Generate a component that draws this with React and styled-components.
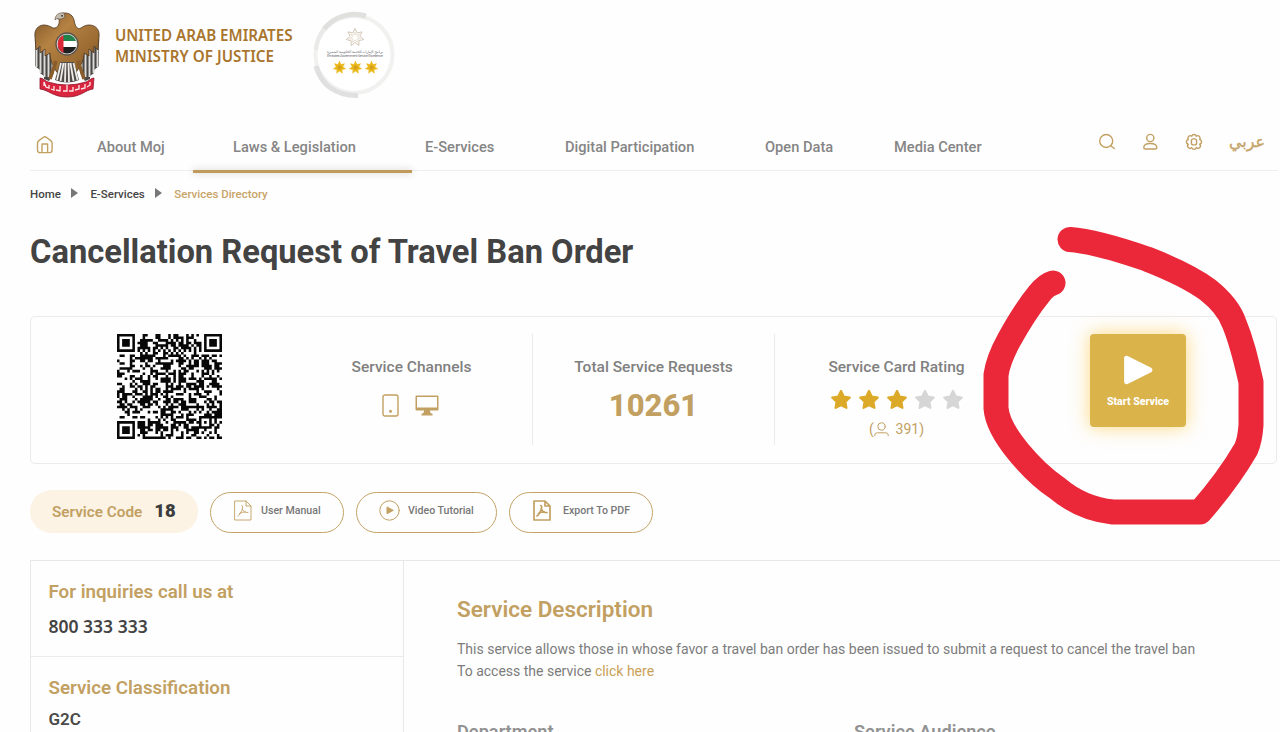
import React from "react";
import styled, { createGlobalStyle } from "styled-components";

const gold = "#c2a062";

const GlobalStyle = createGlobalStyle`
  * { box-sizing: border-box; }
  html, body { margin: 0; background: #fefefe; overflow: hidden; }
  body { font-family: Roboto, "Liberation Sans", sans-serif; color: #444; }
`;

const Page = styled.div`
  position: relative;
  width: 1280px;
  height: 732px;
  overflow: hidden;
  padding-left: 30px;
  white-space: nowrap;
`;

const Header = styled.header`
  display: flex;
  height: 124px;
  padding: 9px 0 0 3px;
  align-items: flex-start;
`;

const Ministry = styled.div`
  width: 211px;
  padding: 16px 0 0 14px;
  font: 600 15.2px/21px "Noto Sans", "Open Sans", sans-serif;
  color: #a9752d;
`;

const MinistryLine = styled.div`
  letter-spacing: ${(p) => p.$track}px;
`;

const Nav = styled.nav`
  display: flex;
  height: 47px;
  width: 1248px;
  border-bottom: 1px solid #eeeeee;
`;

const NavIcon = styled.a`
  display: flex;
  width: ${(p) => p.$w}px;
  padding: ${(p) => p.$top}px 0 0 ${(p) => p.$pad || 0}px;
`;

const NavItem = styled.a`
  position: relative;
  width: ${(p) => p.$w}px;
  padding-left: ${(p) => p.$pad || 0}px;
  font-size: 14.65px;
  font-weight: 500;
  line-height: 46px;
  color: #858585;
  ${(p) =>
    p.$active &&
    `&::after {
      content: "";
      position: absolute;
      left: 0; right: 0; bottom: -3px;
      height: 3px;
      background: #c09a5b;
      box-shadow: 0 0 7px rgba(80, 70, 50, 0.3);
    }`}
`;

const Arabic = styled.a`
  padding-top: 5px;
  font: 400 16px/26px "DejaVu Sans", sans-serif;
  -webkit-text-stroke: 0.4px #c5a56c;
  color: #c5a56c;
`;

const Crumbs = styled.div`
  display: flex;
  align-items: center;
  height: 16px;
  margin-top: 15px;
  font-size: 11.5px;
  font-weight: 500;
`;

const Crumb = styled.span`
  color: ${(p) => (p.$current ? "#c8a468" : "#454545")};
`;

const CrumbArrow = styled.i`
  margin: -2px 12px 0 10.5px;
  border-left: 7px solid #777;
  border-top: 5px solid transparent;
  border-bottom: 5px solid transparent;
`;

const Title = styled.h1`
  margin: 29px 0 0;
  padding-top: 1px;
  font-size: 32.7px;
  font-weight: 700;
  line-height: 40px;
  color: #434343;
`;

const Card = styled.section`
  display: flex;
  width: 1247px;
  height: 148px;
  margin-top: 44px;
  padding-top: 17px;
  border: 1px solid #ebebeb;
  border-radius: 5px;
`;

const QrCell = styled.div`
  width: 260px;
  padding-left: 86px;
`;

const Stat = styled.div`
  display: flex;
  flex-direction: column;
  align-items: center;
  width: ${(p) => p.$w}px;
  height: 111px;
  padding-top: 22px;
  ${(p) => p.$line && "border-right: 1px solid #ebebeb;"}
`;

const StatLabel = styled.div`
  font-size: 15.5px;
  font-weight: 500;
  line-height: 22px;
  color: #808080;
`;

const Channels = styled.div`
  display: flex;
  align-items: center;
  gap: 16px;
  margin: 16px 3px 0 0;
`;

const BigNumber = styled.div`
  margin-top: 9px;
  font-size: 31px;
  font-weight: 800;
  line-height: 38px;
  color: ${gold};
`;

const Stars = styled.div`
  display: flex;
  gap: 6px;
  margin-top: 11px;
`;

const Voters = styled.div`
  display: flex;
  align-items: center;
  margin-top: 10px;
  font-size: 14px;
  line-height: 18px;
  color: ${gold};
`;

const StartCell = styled.div`
  padding-left: 72px;
`;

const StartButton = styled.button`
  display: flex;
  flex-direction: column;
  align-items: center;
  width: 96px;
  height: 93px;
  padding: 21px 0 0;
  border: 0;
  border-radius: 4px;
  background: #dab34b;
  box-shadow: 0 0 18px 1px rgba(255, 200, 70, 0.62);
  color: #fff;
  font: 800 10.6px/15px Roboto, sans-serif;
`;

const StartLabel = styled.span`
  margin-top: 9px;
`;

const Actions = styled.div`
  display: flex;
  align-items: center;
  height: 43px;
  margin-top: 26px;
`;

const CodeChip = styled.div`
  display: flex;
  align-items: center;
  width: 168px;
  height: 43px;
  margin-right: 12px;
  padding-left: 22px;
  border-radius: 22px;
  background: #fcf3e5;
  color: ${gold};
  font-size: 15.3px;
  font-weight: 600;
`;

const CodeValue = styled.b`
  margin: -2px 0 0 12px;
  color: #3c3c3c;
  font-size: 18.5px;
`;

const Pill = styled.button`
  display: flex;
  align-items: center;
  width: ${(p) => p.$w}px;
  height: 41px;
  margin: 1px 12px 0 0;
  padding: 0 0 4px ${(p) => p.$pad}px;
  border: 1px solid #c4a368;
  border-radius: 21px;
  background: transparent;
  color: #777;
  font: 500 10.6px/14px Roboto, sans-serif;
`;

const PillText = styled.span`
  margin: 2px 0 0 ${(p) => p.$gap}px;
`;

const Details = styled.main`
  display: flex;
  width: 1250px;
  height: 190px;
  margin-top: 27px;
  border-top: 1px solid #e8e8e8;
`;

const Aside = styled.aside`
  width: 374px;
  border: 1px solid #e8e8e8;
  border-width: 0 1px;
`;

const InfoBlock = styled.div`
  height: ${(p) => p.$h}px;
  padding: 18px 0 0 17.5px;
  border-bottom: 1px solid #ebebeb;
`;

const InfoLabel = styled.div`
  font-size: 18.75px;
  font-weight: 600;
  line-height: 27px;
  color: ${gold};
`;

const Phone = styled.div`
  margin-top: 8px;
  font: 600 17.5px/24px "Noto Sans", sans-serif;
  color: #444;
`;

const InfoValue = styled.div`
  margin-top: 6px;
  font-size: 17px;
  font-weight: 600;
  line-height: 22px;
  color: #4a4a4a;
`;

const Content = styled.div`
  padding: 32px 0 0 53px;
`;

const SectionTitle = styled.h2`
  margin: 0;
  font-size: 22.5px;
  font-weight: 600;
  line-height: 32px;
  color: ${gold};
`;

const Description = styled.p`
  margin: 13px 0 0;
  font-size: 14px;
  line-height: 22px;
  color: #7c7c7c;
`;

const Link = styled.a`
  color: #c9a057;
`;

const Columns = styled.div`
  display: grid;
  grid-template-columns: 397px 300px;
  margin-top: 39px;
  font-size: 18.2px;
  font-weight: 600;
  line-height: 22px;
  color: #929292;
`;

const Marker = styled.svg`
  position: absolute;
  left: 970px;
  top: 215px;
  pointer-events: none;
`;

const Emblem = () => (
  <svg width="68" height="90" viewBox="0 0 68 90">
    <defs>
      <linearGradient id="plumage" x1="0" x2="1" y1="0" y2="1">
        <stop offset="0" stopColor="#7d5628" />
        <stop offset=".35" stopColor="#b58243" />
        <stop offset=".7" stopColor="#9a6a31" />
        <stop offset="1" stopColor="#5f3e1a" />
      </linearGradient>
      <clipPath id="disc"><circle cx="34" cy="35" r="9.500" /></clipPath>
    </defs>
    <path d="M2 30h19v34l-5 8-5-2v-3l-4-3v-3l-5-4zM66 30H47v34l5 8 5-2v-3l4-3v-3l5-4z" fill="#4a4846" />
    <path d="M3.500 33v25M7.500 36v28M11.500 38v30M15.500 41v27M19.500 44v22M64.500 33v25M60.500 36v28M56.500 38v30M52.500 41v27M48.500 44v22" stroke="#dedcd8" strokeWidth="1.900" />
    <path d="M24 9c1-3 4-5 8-5 5 0 8 3 9 7 1 6 3 10 7 8 3-2 5-3 8-3 7 0 11 5 10 12l-1 13-4-4v7l-5-4v7l-5-3c0 8-3 12-7 18l-3 5H27l-4-5c-3-6-6-10-6-18l-5 3v-7l-5 4v-7l-4 4-1-13c-1-7 3-12 9-12 4 0 7 2 9 3 5 1 7-5 6-9z" fill="url(#plumage)" stroke="#4d361f" strokeWidth=".8" />
    <path d="M22 11c0-5 4-8 9-7l1 4c-2 1-3 2.500-6 2-1.500-.5-3-.5-4 1z" fill="#c2bbb0" stroke="#5c4a35" strokeWidth=".6" />
    <circle cx="29" cy="6.800" r=".9" fill="#332519" />
    <path d="M27 53h14l5 18q-12 5-24 0z" fill="#4e4b49" />
    <path d="m28 54-4 17m6.500-17-3 18m5-18-.5 19m3.500-19 .5 19m1.500-19 3 18m0-18 4 17" stroke="#eeece8" strokeWidth="1.800" />
    <path d="m23 52-6 18m28-18 6 18" stroke="#8a5c2a" strokeWidth="3.500" />
    <path d="M7 69c3 0 5 3 8 4q19 6 38 0c3-1 5-4 8-4l-1 11C52 81 48 88 34 88S16 81 7 80z" fill="#d9253d" stroke="#8e182b" strokeWidth=".8" />
    <path d="m11 77 0-4 2 5 3 1v-3m2 4 3 1v-4m2 4 4 1v-5m3 5h4v-6m2 6h4v-4m2 3 4-1v-4m2 4 4-1v-4m2 3 3-2v-3" fill="none" stroke="#ffe9ea" strokeWidth="1.300" />
    <circle cx="34" cy="35" r="11" fill="#e3e1dc" stroke="#5c544b" strokeWidth="1.300" />
    <g clipPath="url(#disc)">
      <path d="M24 25h20v7H24z" fill="#21834c" />
      <path d="M24 32h20v6H24z" fill="#fff" />
      <path d="M24 38h20v8H24z" fill="#202020" />
      <path d="M24 25h6.500v20H24z" fill="#dc2938" />
    </g>
  </svg>
);

const burst = (cx, cy, r, inner) =>
  Array.from({ length: 14 }, (_, i) => {
    const a = (i * Math.PI) / 7 - Math.PI / 2;
    const q = i % 2 ? inner : r;
    return `${cx + Math.cos(a) * q},${cy + Math.sin(a) * q}`;
  }).join(" ");

const SealText = styled.text`
  font: 500 3.7px "DejaVu Sans", sans-serif;
  fill: #77777c;
`;

const Seal = () => (
  <svg width="84" height="92" viewBox="0 0 84 92">
    <circle cx="42" cy="45.500" r="38.500" fill="#fff" stroke="#f1f1f0" strokeWidth="4" />
    <path d="M12 20A39 39 0 0 1 54 7" fill="none" stroke="#e0e0df" strokeWidth="5" />
    <path d="M4 41a39 39 0 0 1 8-21" fill="none" stroke="#e9e9e8" strokeWidth="4" />
    <path d="M4 57c5 19 20 30 42 29.500" fill="none" stroke="#dfe0df" strokeWidth="5" />
    <polygon points={burst(43, 28.500, 9, 5)} fill="#fffefa" stroke="#d5c9bb" strokeWidth="1" />
    <polygon points={burst(43, 28.500, 5.500, 2.500)} fill="none" stroke="#d8cec3" strokeWidth=".6" />
    <SealText x="43" y="43.500" textAnchor="middle" textLength="56">برنامج الإمارات للخدمة الحكومية المتميزة</SealText>
    <SealText x="43" y="47.500" textAnchor="middle" textLength="56">Emirates Government Service Excellence</SealText>
    {[27.5, 43.5, 59.5].map((x) => (
      <g key={x}>
        <polygon points={burst(x, 58.500, 7, 3.700)} fill="#ecba20" />
        <polygon points={burst(x, 58.500, 3.600, 1.200)} fill="#d39b12" />
      </g>
    ))}
  </svg>
);

const N = 41;
const isFinder = (x, y) => (x < 8 && y < 8) || (x > 32 && y < 8) || (x < 8 && y > 32);
const ring = (x, y, cx, cy) => Math.max(Math.abs(x - cx), Math.abs(y - cy));
const qrOn = (x, y) => {
  if (isFinder(x, y)) {
    const d = ring(x, y, x > 20 ? 37 : 3, y > 20 ? 37 : 3);
    return d === 3 || d < 2;
  }
  if (ring(x, y, 34, 34) < 3) return ring(x, y, 34, 34) !== 1;
  if (x === 6 || y === 6) return (x + y) % 2 === 0;
  let h = Math.imul(x + 11, 374761393) ^ Math.imul(y + 29, 668265263);
  h = Math.imul(h ^ (h >>> 13), 1274126177);
  return ((h ^ (h >>> 16)) & 255) < 132;
};
const qrPath = Array.from({ length: N * N }, (_, i) => [i % N, Math.floor(i / N)])
  .filter(([x, y]) => qrOn(x, y))
  .map(([x, y]) => `M${x} ${y}h1v1h-1z`)
  .join("");

const QrCode = () => (
  <svg width="105" height="105" viewBox="0 0 41 41">
    <path d={qrPath} fill="#080808" />
  </svg>
);

const Line = styled.svg`
  flex: none;
  fill: none;
  stroke: ${gold};
  stroke-width: ${(p) => p.$s || 1.4};
  stroke-linecap: round;
  stroke-linejoin: round;
`;

const HomeIcon = () => (
  <Line width="18" height="18" viewBox="0 0 18 18">
    <path d="M1.500 7.200c0-1 .4-1.700 1.100-2.300L7.400 1.300q1.400-1 2.900 0L15 4.900c.8.6 1.100 1.300 1.100 2.300V14q0 2.600-2.500 2.600H4Q1.500 16.600 1.500 14zM6 16.500V8h5.600v8.500" />
  </Line>
);
const SearchIcon = () => (
  <Line width="18" height="18" viewBox="0 0 18 18">
    <circle cx="8.200" cy="8" r="6.500" /><path d="m13 13 3.300 2.500" />
  </Line>
);
const UserIcon = () => (
  <Line width="16" height="18" viewBox="0 0 16 18">
    <circle cx="8.300" cy="5" r="3.600" />
    <path d="M1.800 14.500c0-3 2.500-4 6.500-4s6.500 1 6.500 4q0 1.500-1.500 1.500H3.300q-1.500 0-1.500-1.500z" />
  </Line>
);
const GearIcon = () => (
  <Line width="18" height="18" viewBox="0 0 18 18">
    <path d="M6.700 3.200a2.400 2.400 0 0 1 4.600 0 2.400 2.400 0 0 1 3.400 3.300 2.400 2.400 0 0 1 0 4.700 2.400 2.400 0 0 1-3.400 3.400 2.400 2.400 0 0 1-4.600 0 2.400 2.400 0 0 1-3.400-3.400 2.400 2.400 0 0 1 0-4.700 2.400 2.400 0 0 1 3.400-3.300z" />
    <rect x="6.400" y="5.900" width="5.200" height="6" rx="2" />
  </Line>
);
const PhoneIcon = () => (
  <Line width="17" height="23" viewBox="0 0 17 23">
    <rect x="1" y="1" width="15" height="21" rx="2" /><circle cx="8.500" cy="17.200" r=".8" fill={gold} />
  </Line>
);
const MonitorIcon = () => (
  <svg width="24" height="21" viewBox="0 0 24 21">
    <path fillRule="evenodd" fill={gold} d="M1.500.5h21q1 0 1 1v13q0 1-1 1H15c0 2 .5 3 2.500 3.300v1.700h-11v-1.700C8.500 18.500 9 17.500 9 15.500H1.500q-1 0-1-1v-13q0-1 1-1zM2 2v10.500h20V2z" />
  </svg>
);
const Star = ({ on }) => (
  <svg width="22" height="21" viewBox="0 0 22 21">
    <path d="m11 2 2.700 5.600 6.100.9-4.400 4.300 1 6.100L11 16l-5.400 2.900 1-6.100L2.200 8.500l6.100-.9z" fill={on ? "#dca928" : "#d6d6d6"} stroke={on ? "#dca928" : "#d6d6d6"} strokeWidth="2.200" strokeLinejoin="round" />
  </svg>
);
const VoterIcon = () => (
  <Line $s={1} width="15" height="15" viewBox="0 0 15 15">
    <circle cx="7.500" cy="4.500" r="3.700" /><path d="M.8 13.800v-1q0-2 2.700-2h8q2.700 0 2.700 2v1" />
  </Line>
);
const PlayIcon = () => (
  <svg width="29" height="30" viewBox="0 0 29 30">
    <path d="M2.500 3.200v23.600L26 15z" fill="#fff" stroke="#fff" strokeWidth="4.800" strokeLinejoin="round" />
  </svg>
);
const PdfIcon = ({ bold }) => (
  <Line $s={bold ? 1.7 : 0.9} width="18" height="21" viewBox="0 0 18 21">
    <path d="M1 1h11l5 5v14H1zM12 1v5h5" />
    <path d="M7.800 5.500c1 0 .8 1.500.7 2.500C8 11 5.500 15.500 4 16M8.500 9.500c1 2 3.500 3.500 5.500 3M5.500 13.500c2-1.200 4-1.500 6-1.500" />
  </Line>
);
const VideoIcon = () => (
  <Line $s={1} width="21" height="21" viewBox="0 0 21 21">
    <circle cx="10.500" cy="10.500" r="9.700" /><path d="M8 7.300v6.400l6-3.200z" fill={gold} />
  </Line>
);

export default function App() {
  return (
    <Page>
      <GlobalStyle />
      <Header>
        <Emblem />
        <Ministry>
          <MinistryLine $track={-0.02}>UNITED ARAB EMIRATES</MinistryLine>
          <MinistryLine $track={0.05}>MINISTRY OF JUSTICE</MinistryLine>
        </Ministry>
        <Seal />
      </Header>
      <Nav>
        <NavIcon $w={67} $top={12} $pad={6}><HomeIcon /></NavIcon>
        <NavItem $w={96}>About Moj</NavItem>
        <NavItem $w={219} $pad={40} $active>Laws &amp; Legislation</NavItem>
        <NavItem $w={153} $pad={13}>E-Services</NavItem>
        <NavItem $w={200}>Digital Participation</NavItem>
        <NavItem $w={129}>Open Data</NavItem>
        <NavItem $w={204}>Media Center</NavItem>
        <NavIcon $w={44} $top={9}><SearchIcon /></NavIcon>
        <NavIcon $w={43} $top={9}><UserIcon /></NavIcon>
        <NavIcon $w={44} $top={9}><GearIcon /></NavIcon>
        <Arabic lang="ar">عربي</Arabic>
      </Nav>
      <Crumbs>
        <Crumb>Home</Crumb><CrumbArrow />
        <Crumb>E-Services</Crumb><CrumbArrow />
        <Crumb $current>Services Directory</Crumb>
      </Crumbs>
      <Title>Cancellation Request of Travel Ban Order</Title>
      <Card>
        <QrCell><QrCode /></QrCell>
        <Stat $w={242} $line>
          <StatLabel>Service Channels</StatLabel>
          <Channels><PhoneIcon /><MonitorIcon /></Channels>
        </Stat>
        <Stat $w={242} $line>
          <StatLabel>Total Service Requests</StatLabel>
          <BigNumber>10261</BigNumber>
        </Stat>
        <Stat $w={243}>
          <StatLabel>Service Card Rating</StatLabel>
          <Stars>{[1, 1, 1, 0, 0].map((on, i) => <Star key={i} on={on} />)}</Stars>
          <Voters>(<VoterIcon />&nbsp;&nbsp;391)</Voters>
        </Stat>
        <StartCell>
          <StartButton><PlayIcon /><StartLabel>Start Service</StartLabel></StartButton>
        </StartCell>
      </Card>
      <Actions>
        <CodeChip>Service Code<CodeValue>18</CodeValue></CodeChip>
        <Pill $w={134} $pad={23}><PdfIcon /><PillText $gap={9}>User Manual</PillText></Pill>
        <Pill $w={141} $pad={22}><VideoIcon /><PillText $gap={8}>Video Tutorial</PillText></Pill>
        <Pill $w={144} $pad={23}><PdfIcon bold /><PillText $gap={12}>Export To PDF</PillText></Pill>
      </Actions>
      <Details>
        <Aside>
          <InfoBlock $h={96}>
            <InfoLabel>For inquiries call us at</InfoLabel>
            <Phone>800 333 333</Phone>
          </InfoBlock>
          <InfoBlock $h={110}>
            <InfoLabel>Service Classification</InfoLabel>
            <InfoValue>G2C</InfoValue>
          </InfoBlock>
        </Aside>
        <Content>
          <SectionTitle>Service Description</SectionTitle>
          <Description>
            This service allows those in whose favor a travel ban order has been issued to submit a request to cancel the travel ban<br />
            To access the service <Link>click here</Link>
          </Description>
          <Columns><span>Department</span><span>Service Audience</span></Columns>
        </Content>
      </Details>
      <Marker width="310" height="320" viewBox="0 0 310 320">
        <path
          d="M100 24.500C120 26 145 33 177 44C200 53 222 63 238 75Q258 91 264 108C272 127 276 145 281 167V210Q280 225 276 234Q258 265 230 297H143Q112 294 87 273C65 258 28 220 26 193V160Q28 145 39 125C50 105 60 90 69 79Q76 70 83 68"
          fill="none" stroke="#ea2839" strokeWidth="25" strokeLinecap="round" strokeLinejoin="round"
        />
      </Marker>
    </Page>
  );
}
